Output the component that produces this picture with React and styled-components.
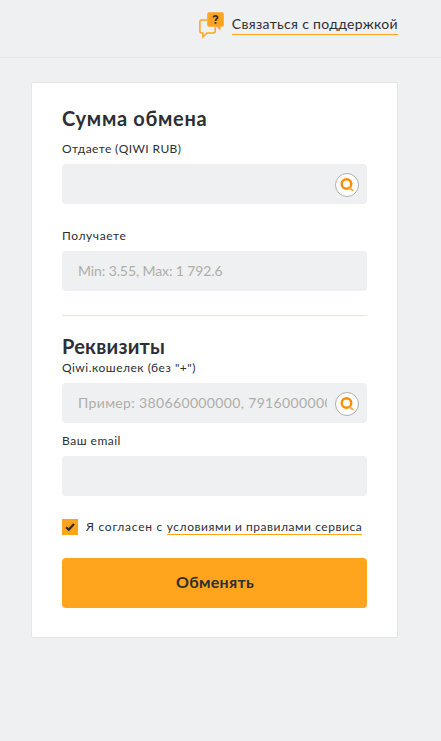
import React, { useState } from "react";
import styled, { createGlobalStyle } from "styled-components";

const GlobalStyle = createGlobalStyle`
  *, *::before, *::after {
    box-sizing: border-box;
  }

  body {
    margin: 0;
    min-height: 100vh;
    background: #eff0f2;
    color: #2c2f34;
    font-family: Lato, "Noto Sans", sans-serif;
  }
`;

const Header = styled.header`
  display: flex;
  justify-content: flex-end;
  height: 58px;
  padding: 12px 43px 0 0;
  border-bottom: 1px solid #e6e6e3;
`;

const Support = styled.a`
  display: flex;
  align-items: flex-start;
  gap: 8px;
  color: inherit;
  text-decoration: none;

  svg {
    flex: none;
  }
`;

const SupportText = styled.span`
  height: 23px;
  border-bottom: 1px solid #ffa41c;
  font-size: 14px;
  line-height: 24px;
  letter-spacing: 0.32px;
  white-space: nowrap;
`;

const Card = styled.form`
  display: flex;
  flex-direction: column;
  width: 367px;
  height: 556px;
  margin: 24px 0 0 31px;
  padding: 23px 30px 29px;
  background: #fff;
  border: 1px solid #e6e6e3;
  border-radius: 2px;
`;

const Title = styled.h2`
  margin: 0;
  height: ${(props) => props.$height};
  font-size: 20px;
  font-weight: 700;
  line-height: 24px;
  letter-spacing: ${(props) => props.$spacing || "0"};
`;

const Field = styled.div`
  display: flex;
  flex-direction: column;
  margin-bottom: ${(props) => props.$gap || "0"};
`;

const Label = styled.label`
  height: 23px;
  font-size: 12px;
  line-height: 16px;
  letter-spacing: ${(props) => props.$spacing || "0.5px"};
`;

const InputBox = styled.div`
  display: flex;
  align-items: center;
  height: 40px;
  padding: 0 8px 0 16px;
  background: #eff0f2;
  border-radius: 4px;
`;

const Input = styled.input`
  flex: 1;
  min-width: 0;
  height: 40px;
  margin-right: 8px;
  padding: 0 0 2px;
  border: 0;
  outline: 0;
  background: transparent;
  color: inherit;
  font: 14px Lato, "Noto Sans", sans-serif;
  letter-spacing: ${(props) => props.$spacing || "0"};

  &::placeholder {
    color: #aeaea8;
    opacity: 1;
  }
`;

const Coin = styled.svg`
  flex: none;
  width: 24px;
  height: 24px;
  margin-top: 2px;
`;

const Divider = styled.hr`
  width: 100%;
  height: 1px;
  margin: 0 0 18px;
  border: 0;
  background: #e6e6e0;
`;

const Terms = styled.div`
  display: flex;
  align-items: flex-start;
  gap: 8px;
  height: 16px;
  margin-bottom: 23px;
  font-size: 12px;
  line-height: 16px;
  white-space: nowrap;
  letter-spacing: 0.73px;

  a {
    display: inline-block;
    height: 16px;
    border-bottom: 1px solid #ffa41c;
    color: inherit;
    letter-spacing: 0.54px;
    text-decoration: none;
  }
`;

const Checkbox = styled.button`
  display: block;
  flex: none;
  width: 16px;
  height: 16px;
  padding: 0;
  border: 0;
  background: ${(props) => (props.$checked ? "#ffa41c" : "#eff0f2")};
  cursor: pointer;

  svg {
    display: block;
  }
`;

const Submit = styled.button`
  height: 50px;
  padding: 0 0 2px 1px;
  border: 0;
  border-radius: 4px;
  background: #ffa41c;
  color: #2c2f34;
  font: 700 16px/48px Lato, "Noto Sans", sans-serif;
  letter-spacing: 0.3px;
  cursor: pointer;
`;

const SupportIcon = () => (
  <svg width="25" height="27" viewBox="0 0 25 27" fill="none">
    <path
      d="M8 8H2.5Q.9 8 .9 9.6V19.5Q.9 21 2.5 21H3.9V25L8 21H14.6Q16.2 21 16.2 19.5V15.5"
      stroke="#ffa41c"
      strokeWidth="1.5"
    />
    <path
      d="M10.2.2H22.8Q24.8.2 24.8 2.2V12.8Q24.8 14.6 22.8 14.8H21.5V18.4L17.5 14.8H10.2Q8.2 14.8 8.2 12.8V2.2Q8.2.2 10.2.2Z"
      fill="#ffa41c"
    />
    <path
      d="M14.3 5.5Q14.5 3.8 16.5 3.8 18.6 3.8 18.6 5.5 18.6 6.5 17.5 7.1 16.5 7.7 16.5 9"
      stroke="#2c2f34"
      strokeWidth="1.7"
    />
    <path d="M15.6 10H17.4V11.7H15.6Z" fill="#2c2f34" />
  </svg>
);

const QiwiIcon = () => (
  <Coin viewBox="0 0 24 24">
    <circle cx="12" cy="12" r="11.5" fill="#fff" stroke="#aeaeae" />
    <circle cx="11.5" cy="11" r="4.8" fill="none" stroke="#ff8c00" strokeWidth="2.4" />
    <path d="M12.8 13.6Q15.5 14 16.4 15.6L18.6 16.9 18.2 18.4Q15 17.7 12.8 13.6Z" fill="#ffa43a" />
  </Coin>
);

const App = () => {
  const [checked, setChecked] = useState(true);

  return (
    <>
      <GlobalStyle />
      <Header>
        <Support href="#support">
          <SupportIcon />
          <SupportText>Связаться с поддержкой</SupportText>
        </Support>
      </Header>
      <Card onSubmit={(e) => e.preventDefault()}>
        <Title $height="35px" $spacing="0.7px">
          Сумма обмена
        </Title>
        <Field $gap="24px">
          <Label htmlFor="give" $spacing="0.4px">
            Отдаете (QIWI RUB)
          </Label>
          <InputBox>
            <Input id="give" />
            <QiwiIcon />
          </InputBox>
        </Field>
        <Field $gap="24px">
          <Label htmlFor="get" $spacing="0.6px">
            Получаете
          </Label>
          <InputBox>
            <Input id="get" placeholder="Min: 3.55, Max: 1 792.6" $spacing="-0.1px" />
          </InputBox>
        </Field>
        <Divider />
        <Title $height="26px" $spacing="0.25px">
          Реквизиты
        </Title>
        <Field $gap="10px">
          <Label htmlFor="wallet">Qiwi.кошелек (без "+")</Label>
          <InputBox>
            <Input
              id="wallet"
              placeholder="Пример: 380660000000, 79160000000"
              $spacing="0.35px"
            />
            <QiwiIcon />
          </InputBox>
        </Field>
        <Field $gap="23px">
          <Label htmlFor="email">Ваш email</Label>
          <InputBox>
            <Input id="email" />
          </InputBox>
        </Field>
        <Terms>
          <Checkbox
            type="button"
            role="checkbox"
            aria-checked={checked}
            aria-label="Согласие"
            $checked={checked}
            onClick={() => setChecked(!checked)}
          >
            {checked && (
              <svg width="16" height="16" viewBox="0 0 16 16" fill="none">
                <path d="M4.1 8.2L6.8 10.6 12 5.1" stroke="#2c2f34" strokeWidth="2.2" />
              </svg>
            )}
          </Checkbox>
          <span>
            Я согласен с <a href="#terms">условиями и правилами сервиса</a>
          </span>
        </Terms>
        <Submit type="submit">Обменять</Submit>
      </Card>
    </>
  );
};

export default App;
